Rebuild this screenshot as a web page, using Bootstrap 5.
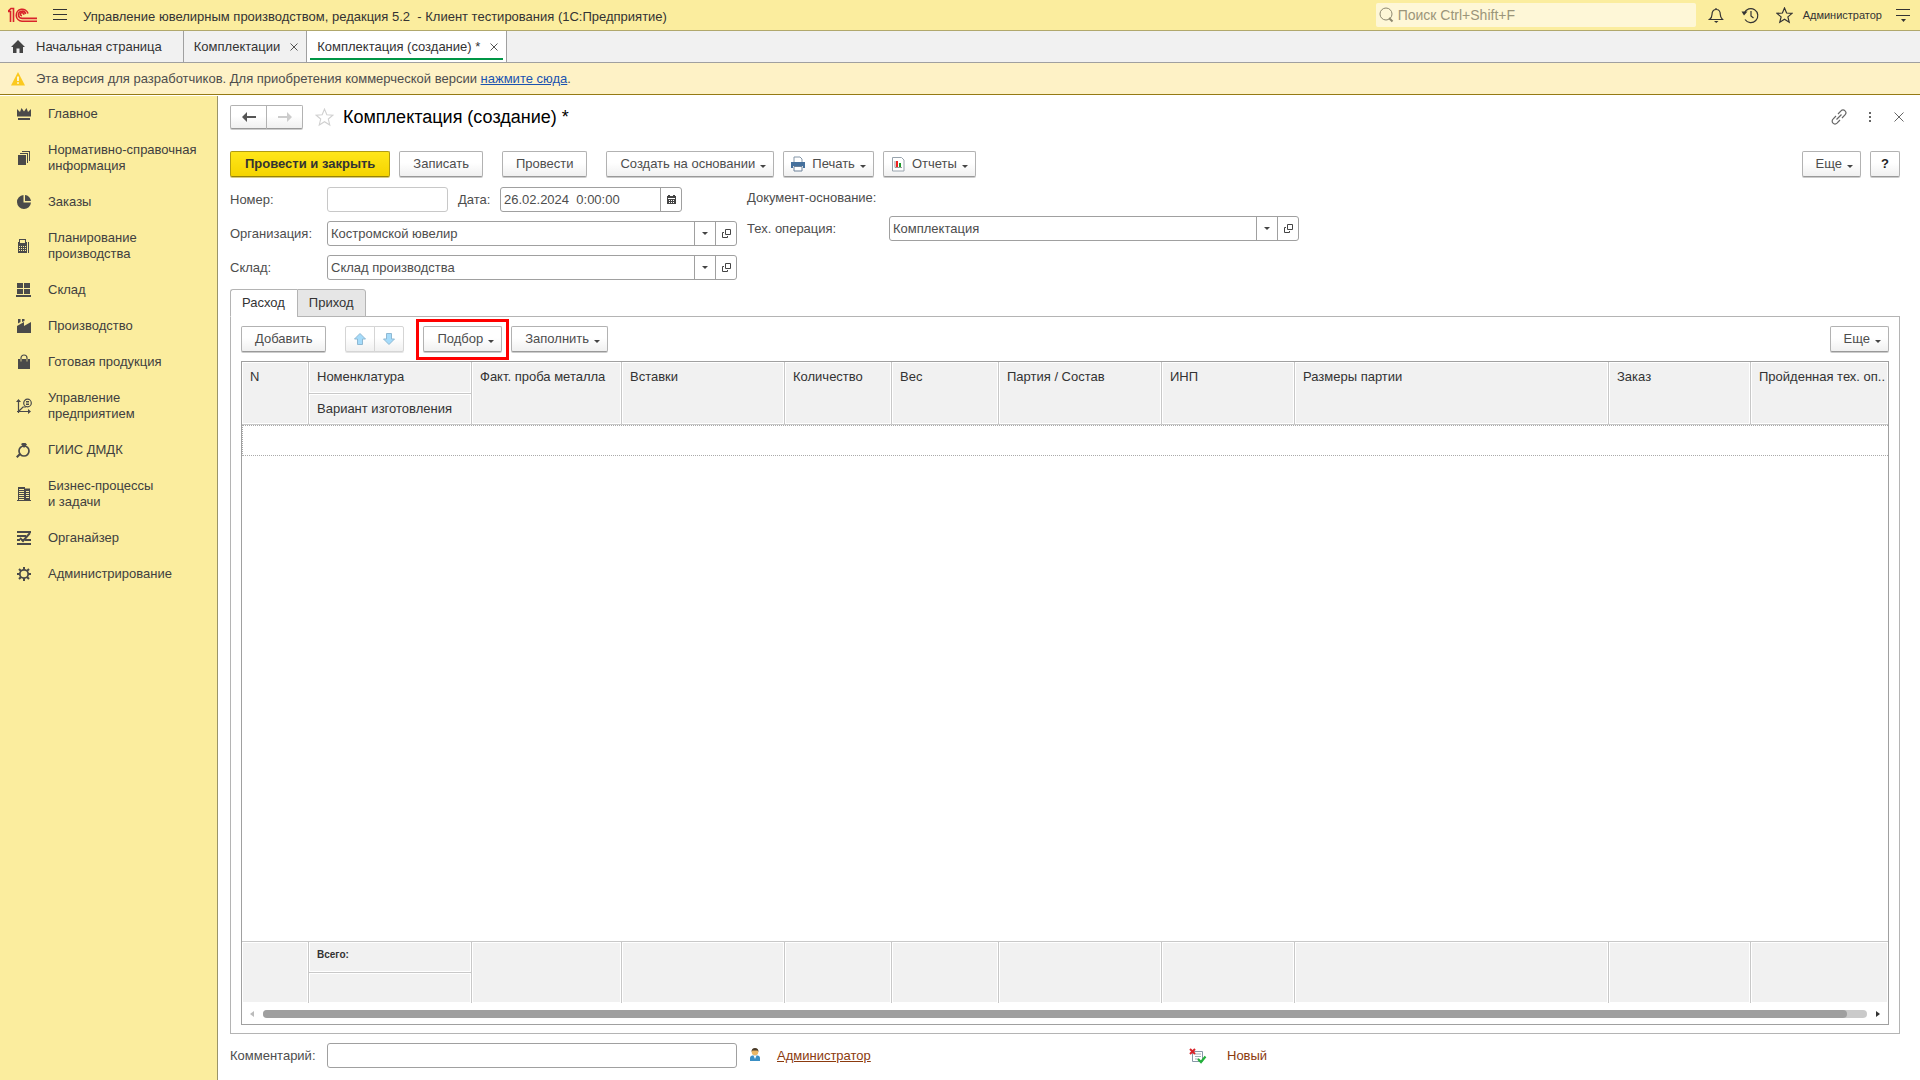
<!DOCTYPE html>
<html lang="ru">
<head>
<meta charset="utf-8">
<meta name="viewport" content="width=device-width, initial-scale=1">
<title>Комплектация (создание) *</title>
<link href="https://cdn.jsdelivr.net/npm/bootstrap@5.3.0/dist/css/bootstrap.min.css" rel="stylesheet">
<style>
:root { --ink: #4d4d4d; --line: #a0a0a0; --soft: #c8c8c8; --cell: #f1f1f1; --sun: #fbed9e; }
body { font-family: "Liberation Sans", Arial, sans-serif; font-size: 13px; line-height: 16px; color: var(--ink); background: #fff; }
svg { display: block; flex: none; }
button, input { font: inherit; color: inherit; }
.plain { border: 0; background: none; padding: 0; display: flex; align-items: center; justify-content: center; }

.top-bar { height: 31px; background: var(--sun); border-bottom: 1px solid #b1a86c; color: #333; padding: 0 10px 0 8px; }
.app-title { white-space: pre; }
.top-search { width: 320px; height: 24px; background: #fef7d7; border-radius: 2px; padding-left: 3px; margin: 3px 0; color: #8d8870; align-self: flex-start; }
.top-search input { border: 0; background: none; outline: 0; padding: 0; font-size: 14px; min-width: 0; }
.top-search input::placeholder { color: #9b957a; opacity: 1; }
.top-icons { gap: 17px; margin: 0 10px 0 12px; }
.user-name { font-size: 11px; margin-right: 14px; }

.window-tabs { height: 32px; background: var(--cell); border-bottom: 1px solid var(--line); color: #333; }
.window-tabs a { color: inherit; text-decoration: none; }
.window-tab { border-right: 1px solid var(--line); padding: 0 8px 0 10px; gap: 10px; }
.window-tab.home { padding: 0 21px 0 11px; gap: 11px; }
.window-tab.current { background: linear-gradient(#009646, #009646) 3px 27px / calc(100% - 6px) 2px no-repeat #fff; }

.dev-note { height: 32px; background: #fef2c6; border-bottom: 1px solid #957a14; padding-left: 11px; gap: 11px; }
.dev-note a { color: #1a53b0; }

.side-menu { width: 218px; flex: none; background: var(--sun); border-right: 1px solid #9a9468; margin-top: 1px; color: #404040; }
.side-menu a { display: flex; align-items: center; padding: 10px 12px 10px 16px; gap: 16px; color: inherit; text-decoration: none; }
.side-menu svg { fill: #4a4a4a; }

.form-area { padding: 10px 20px 12px 12px; min-width: 0; }
.form-title { font-size: 18px; line-height: 24px; color: #000; margin: 0 0 0 9px; font-weight: 400; }
.form-icons { gap: 22px; margin-right: -6px; }
.tool { display: inline-flex; align-items: center; justify-content: center; height: 26px; padding: 0 13px; white-space: nowrap; border: 1px solid #b2b2b2; border-bottom-color: #999; border-radius: 2px; background: linear-gradient(#fff 45%, #f0f0f0); box-shadow: 0 1px 0 #ccc; }
.tool.main-action { padding: 0 14px; background: linear-gradient(#ffe61a, #f5d400); border-color: #b09b13; border-bottom-color: #95820a; box-shadow: 0 1px 0 #d8cb80; font-weight: 700; color: #333; }
.tool.drop { padding-right: 7px; gap: 5px; }
.tool.drop::after { content: ""; border: 3px solid transparent; border-top-color: #444; border-bottom: 0; margin-top: 4px; }
.tool.pictured { padding-left: 6px; }
.tool.pictured svg { margin-right: 1px; }
.tool.help { padding: 0 10px; color: #222; }
.tool.step { height: 24px; width: 37px; padding: 0; }
.tool.move { width: 30px; padding: 0; border-color: #d5d5d5; box-shadow: 0 1px 0 #e5e5e5; }
.tool.first { border-radius: 2px 0 0 2px; }
.tool.last { border-radius: 0 2px 2px 0; margin-left: -1px; }
.tools { gap: 9px; }
.command-bar { margin-top: 22px; }
.apart { margin-left: 10px; }

.fields { gap: 10px; margin-top: 10px; }
.fields-left { width: 507px; gap: 9px; }
.fields-right { width: 552px; gap: 8px; padding-top: 1px; }
.fields-left .lead-label, .comment-label { width: 97px; flex: none; }
.fields-left .date-label { width: 52px; padding-left: 10px; }
.fields-right label { width: 142px; flex: none; }
.no-value { height: 20px; }
.entry { display: flex; height: 25px; border: 1px solid var(--line); border-radius: 3px; background: #fff; min-width: 0; }
.entry input { flex: 1; min-width: 0; width: 0; border: 0; outline: 0; background: none; padding: 0 3px; }
.entry button { width: 21px; border-left: 1px solid var(--line); }
.entry.idle { border-color: var(--soft); width: 121px; }
.entry.date { width: 182px; }
.chev { border: 3px solid transparent; border-top-color: #444; border-bottom: 0; }

.page-tabs { margin-top: 9px; position: relative; z-index: 1; color: #333; }
.page-tab { height: 28px; padding: 0 11px; border: 1px solid #b4b4b4; background: #e6e6e6; color: inherit; border-radius: 0 3px 0 0; }
.page-tab.chosen { background: #fff; border-bottom-color: #fff; border-radius: 3px 0 0 0; border-right: 0; padding-right: 12px; }
.sheet { border: 1px solid #b4b4b4; margin-top: -1px; padding: 9px 10px 8px; min-height: 0; }
.marked { position: relative; display: flex; margin: 0 0 0 10px; }
.marked-frame { position: absolute; inset: -7px -7px -8px; border: 3px solid #f00; pointer-events: none; }

.grid-box { border: 1px solid var(--line); margin-top: 9px; min-height: 0; overflow: hidden; color: #333; }
.rows-box { min-height: 0; }
.rows { width: 100%; height: 100%; table-layout: fixed; border-collapse: separate; border-spacing: 0; }
.rows th, .rows tfoot td { height: 31px; background: var(--cell); border-left: 1px solid var(--soft); box-shadow: inset 0 0 0 1px #fff; padding: 7px 8px; font-weight: 400; vertical-align: top; white-space: nowrap; overflow: hidden; }
.rows th:last-child { padding-right: 0; }
.rows tr:first-child > .edge { border-left: 0; }
.rows .under { border-top: 1px solid var(--soft); }
.rows tfoot tr:first-child td { border-top: 1px solid var(--soft); font-size: 10px; font-weight: 700; padding-top: 5px; }
.rows thead th[rowspan], .rows thead .under { border-bottom: 1px solid var(--soft); }
.rows .blank td { height: 31px; border: 1px dotted #aaa; border-right: 0; padding: 0; }
.rows .rest td { padding: 0; }
.col-n { width: 66px; } .col-item { width: 163px; } .col-probe { width: 150px; } .col-num { width: 107px; }
.col-inp { width: 133px; } .col-size { width: 314px; } .col-order { width: 142px; }
.scroller { height: 21px; padding: 0 8px; gap: 9px; }
.scroller .track { height: 8px; border-radius: 4px; background: #cacaca; }
.scroller .thumb { height: 8px; border-radius: 4px; background: #9f9f9f; }
.arrow-l, .arrow-r { border: 3px solid transparent; }
.arrow-l { border-right: 4px solid #bbb; border-left: 0; }
.arrow-r { border-left: 4px solid #333; border-right: 0; }
.bottom-row { margin-top: 9px; }
.bottom-row .entry { width: 410px; }
.bottom-row a { color: #8b3a0e; }
.bottom-row .author { width: 412px; margin-left: 12px; }
.bottom-row .state { margin-left: 20px; text-decoration: none; }
</style>
</head>
<body class="d-flex flex-column vh-100 overflow-hidden">

<header class="top-bar d-flex align-items-center flex-shrink-0">
  <svg width="29" height="16" viewBox="0 0 29 16" fill="none" stroke="#d9232a" stroke-width="1.600"><path d="M0 4.500h2.500v10.500M2.500 1.500h3v13.500M0 4.500L3 1.500"/><path d="M20 6.500A6 6 0 1 0 14 14.200h15M17.600 7A3.600 3.600 0 1 0 14 11.400h15M15.500 7.800a1.600 1.600 0 1 0-1.500 1"/></svg>
  <button class="plain ms-3" type="button" aria-label="Меню"><svg width="14" height="12" stroke="#333"><path d="M0 .5h14M0 5.500h14M0 10.500h14"/></svg></button>
  <div class="app-title flex-grow-1 ms-3 pt-1">Управление ювелирным производством, редакция 5.2  - Клиент тестирования (1С:Предприятие)</div>
  <div class="top-search d-flex align-items-center">
    <svg width="15" height="16" fill="none" stroke="#8d8870"><circle cx="7" cy="7" r="6"/><path d="M10 11l3.500 3.500" stroke-width="2"/></svg>
    <input class="flex-grow-1 ms-1" type="search" placeholder="Поиск Ctrl+Shift+F" aria-label="Поиск">
  </div>
  <div class="top-icons d-flex align-items-center">
    <button class="plain" type="button" aria-label="Оповещения"><svg width="16" height="17" viewBox="0 0 16 17" fill="none" stroke="#333" stroke-width="1.200"><path d="M8 1v1.500M2 12.500h12.500c-1.500-1.500-2.200-2.500-2.200-5C12.300 4 10.500 2.500 8.200 2.500S4 4 4 7.500c0 2.500-.5 3.500-2.500 5z"/><path d="M6 14h4.500L8.200 16z" fill="#333" stroke="none"/></svg></button>
    <button class="plain" type="button" aria-label="История"><svg width="18" height="17" viewBox="0 0 18 17" fill="none" stroke="#333" stroke-width="1.200"><path d="M3.300 6A7 7 0 1 1 4 12.500M10 4v5l2.500 2"/><path d="M.5 4.500h6L3 8.500z" fill="#333" stroke="none"/></svg></button>
    <button class="plain" type="button" aria-label="Избранное"><svg width="17" height="17" viewBox="0 0 17 17" fill="none" stroke="#333" stroke-width="1.200"><path d="M8.500 1l2.100 5 5.400.4-4.100 3.500 1.300 5.300-4.700-2.900-4.700 2.900 1.300-5.300L1 6.400 6.400 6z"/></svg></button>
  </div>
  <span class="user-name">Администратор</span>
  <button class="plain" type="button" aria-label="Настройки"><svg width="14" height="14" stroke="#333"><path d="M0 1.500h14M0 7.500h14"/><path d="M5 11h5l-2.500 3z" fill="#333" stroke="none"/></svg></button>
</header>

<nav class="window-tabs d-flex flex-shrink-0">
  <a class="window-tab home d-flex align-items-center" href="#"><svg width="14" height="13" fill="#444"><path d="M7 0l7 7h-2v6H8.500V8.500h-3V13H2V7H0z"/></svg>Начальная страница</a>
  <div class="window-tab d-flex align-items-center"><a href="#">Комплектации</a><button class="plain" type="button" aria-label="Закрыть"><svg width="8" height="8" stroke="#555"><path d="M.5.500l7 7M7.500.500l-7 7"/></svg></button></div>
  <div class="window-tab current d-flex align-items-center"><a href="#">Комплектация (создание) *</a><button class="plain" type="button" aria-label="Закрыть"><svg width="8" height="8" stroke="#555"><path d="M.5.500l7 7M7.500.500l-7 7"/></svg></button></div>
</nav>

<div class="dev-note d-flex align-items-center flex-shrink-0">
  <svg width="14" height="14"><path d="M7 0l7 13.500H0z" fill="#fbc91f"/><path d="M6.200 4.500h1.600v4.500H6.200zM6.200 10.200h1.600v1.600H6.200z" fill="#fff"/></svg>
  <span>Эта версия для разработчиков. Для приобретения коммерческой версии <a href="#">нажмите сюда</a>.</span>
</div>

<div class="d-flex flex-grow-1 overflow-hidden">
  <nav class="side-menu">
    <ul class="list-unstyled mb-0">
      <li><a href="#"><svg width="16" height="16"><path d="M1 3l3 3 1.500-4L8 5.500 10.500 2 12 6l3-3v7.500H1zM2 12h12v2H2z"/></svg>Главное</a></li>
      <li><a href="#"><svg width="16" height="16"><path d="M2 5h8v10H2zM4 3h8v10h-1V4H4zM6 1h8v10h-1V2H6z"/></svg><span>Нормативно-справочная<br>информация</span></a></li>
      <li><a href="#"><svg width="16" height="16"><path d="M7.500 1v7.500H15A7 7 0 1 1 7.500 1zM9 1a6.500 6.500 0 0 1 6 6H9z"/></svg>Заказы</a></li>
      <li><a href="#"><svg width="16" height="16"><path fill-rule="evenodd" d="M2 4h1V1h7v3h1v11H2zM4 2v3h5V2zM3 8h1v1H3zM5 8h1v1H5zM7 8h1v1H7zM9 8h1v1H9zM3 10h1v1H3zM5 10h1v1H5zM7 10h1v1H7zM9 10h1v1H9zM3 12h1v1H3zM5 12h1v1H5zM7 12h1v1H7zM9 12h1v1H9zM12 4h1v11h-1z"/></svg><span>Планирование<br>производства</span></a></li>
      <li><a href="#"><svg width="16" height="16"><path d="M1 1h6v5H1zM8 1h6v5H8zM1 7h6v5H1zM8 7h6v5H8zM0 13h15v2H0z"/></svg>Склад</a></li>
      <li><a href="#"><svg width="16" height="16"><path d="M2 1h2.500v3L2 5.500zM6 1h2.500v2L6 4zM1 8l7-4v4l7-4v11H1z"/></svg>Производство</a></li>
      <li><a href="#"><svg width="16" height="16"><path d="M2 5h12v10H2z"/><path d="M5 7V4a3 3 0 0 1 6 0v3" fill="none" stroke="#4a4a4a" stroke-width="1.200"/><path d="M5 5v2.500M11 5v2.500" stroke="#fbed9e" stroke-width=".8"/></svg>Готовая продукция</a></li>
      <li><a href="#"><svg width="16" height="16"><path d="M2.500 15V2M1 13.500h13M3 13l4-4 3 0" fill="none" stroke="#4a4a4a" stroke-width="1.200"/><path d="M0 4l2.500-3L5 4zM12 11l3 2.500-3 2.500z"/><circle cx="11.500" cy="5" r="3.800" fill="none" stroke="#4a4a4a" stroke-width="1.200"/><path d="M10 3h3v1.500h-3zM10 5.500h3V7h-3z"/></svg><span>Управление<br>предприятием</span></a></li>
      <li><a href="#"><svg width="16" height="16"><circle cx="8" cy="9" r="5" fill="none" stroke="#4a4a4a" stroke-width="1.700"/><path d="M5 2l1.500-1h3L11 2.500 8 6zM0 14.500l3.500-3.500 1.500 1.500L1.500 16z"/></svg>ГИИС ДМДК</a></li>
      <li><a href="#"><svg width="16" height="16"><path fill-rule="evenodd" d="M2 1h7v1.500h5V14h1v1H1v-1h1zM3 3v1h5V3zM3 5v1h5V5zM3 7v1h5V7zM3 9v1h5V9zM3 11v1h5v-1zM3 13v1h5v-1zM10 5v1h3V5zM10 7v1h3V7zM10 9v1h3V9zM10 11v1h3v-1z"/></svg><span>Бизнес-процессы<br>и задачи</span></a></li>
      <li><a href="#"><svg width="16" height="16"><path d="M1 2h14M1 6h9M1 10h3M9 10h6M1 14h14M4 8l3 3 7-8" fill="none" stroke="#4a4a4a" stroke-width="1.900"/></svg>Органайзер</a></li>
      <li><a href="#"><svg width="16" height="16"><circle cx="8" cy="8" r="4.200" fill="none" stroke="#4a4a4a" stroke-width="1.800"/><path d="M8 1v3M8 12v3M1 8h3M12 8h3M3 3l2 2M11 11l2 2M13 3l-2 2M5 11l-2 2" stroke="#4a4a4a" stroke-width="2"/></svg>Администрирование</a></li>
    </ul>
  </nav>

  <main class="form-area flex-grow-1 d-flex flex-column">
    <div class="d-flex align-items-center">
      <button class="tool step first" type="button" aria-label="Назад"><svg width="14" height="10"><path d="M0 5l5-5v4h9v2H5v4z" fill="#555"/></svg></button>
      <button class="tool step last" type="button" aria-label="Вперед"><svg width="14" height="10"><path d="M14 5L9 0v4H0v2h9v4z" fill="#ccc"/></svg></button>
      <button class="plain ms-2 ps-1" type="button" aria-label="В избранное"><svg width="19" height="19" viewBox="0 0 17 17" fill="none" stroke="#d0d0d0"><path d="M8.500 1l2.100 5 5.400.4-4.100 3.500 1.300 5.300-4.700-2.900-4.700 2.900 1.300-5.300L1 6.400 6.400 6z"/></svg></button>
      <h1 class="form-title flex-grow-1">Комплектация (создание) *</h1>
      <div class="form-icons d-flex align-items-center">
        <button class="plain" type="button" aria-label="Ссылка"><svg width="16" height="16" fill="none" stroke="#666" stroke-width="1.200"><path d="M7 5l3-3.200a2.800 2.800 0 0 1 4 4L11 9M9 11l-3 3.200a2.800 2.800 0 0 1-4-4L5 7M5.500 10.500l5-5"/></svg></button>
        <button class="plain" type="button" aria-label="Еще"><svg width="3" height="12" fill="#666"><path d="M0 1h2v2H0zM0 5h2v2H0zM0 9h2v2H0z"/></svg></button>
        <button class="plain" type="button" aria-label="Закрыть"><svg width="12" height="10" stroke="#666"><path d="M.5.500l9 9M9.500.500l-9 9"/></svg></button>
      </div>
    </div>

    <div class="tools command-bar d-flex">
      <button class="tool main-action" type="button">Провести и закрыть</button>
      <button class="tool" type="button">Записать</button>
      <button class="tool apart" type="button">Провести</button>
      <button class="tool drop apart" type="button">Создать на основании</button>
      <button class="tool drop pictured" type="button"><svg width="16" height="16"><path d="M4 7V1h6l2 2v4" fill="#fff" stroke="#8496a8"/><path d="M1 6h14v6h-2v-2H3v2H1z" fill="#45709c"/><path d="M4 10.500h8V15H4z" fill="#fff" stroke="#6c8199"/></svg>Печать</button>
      <button class="tool drop pictured" type="button"><svg width="16" height="16"><path d="M2.500 1.500h9l2.500 2.500v11H2.500z" fill="#fff" stroke="#98a3ad"/><path d="M5 5v6.500h7" fill="none" stroke="#999"/><path d="M6 5h2v6H6z" fill="#f02020"/><path d="M9 7h2v4H9z" fill="#1b9a2a"/></svg>Отчеты</button>
      <button class="tool drop ms-auto" type="button">Еще</button>
      <button class="tool help fw-bold" type="button" aria-label="Справка">?</button>
    </div>

    <div class="fields d-flex">
      <div class="fields-left d-flex flex-column">
        <div class="d-flex align-items-center">
          <label class="lead-label" for="num">Номер:</label>
          <div class="entry idle"><input id="num" type="text"></div>
          <label class="date-label" for="date">Дата:</label>
          <div class="entry date"><input id="date" type="text" value="26.02.2024  0:00:00"><button class="plain" type="button" aria-label="Календарь"><svg width="9" height="9" fill="#444"><path fill-rule="evenodd" d="M0 1h1V0h2v1h3V0h2v1h1v8H0zM1 3v1h7V3zM2 5v1h1V5zM4 5v1h1V5zM6 5v1h1V5zM2 7v1h1V7zM4 7v1h1V7zM6 7v1h1V7z"/></svg></button></div>
        </div>
        <div class="d-flex align-items-center">
          <label class="lead-label" for="org">Организация:</label>
          <div class="entry flex-grow-1"><input id="org" type="text" value="Костромской ювелир"><button class="plain" type="button" aria-label="Выбрать"><i class="chev"></i></button><button class="plain" type="button" aria-label="Открыть"><svg width="9" height="9" fill="none" stroke="#444"><path d="M3.500.500h5v5h-5zM2 3.500H.5v5h5V7"/></svg></button></div>
        </div>
        <div class="d-flex align-items-center">
          <label class="lead-label" for="store">Склад:</label>
          <div class="entry flex-grow-1"><input id="store" type="text" value="Склад производства"><button class="plain" type="button" aria-label="Выбрать"><i class="chev"></i></button><button class="plain" type="button" aria-label="Открыть"><svg width="9" height="9" fill="none" stroke="#444"><path d="M3.500.500h5v5h-5zM2 3.500H.5v5h5V7"/></svg></button></div>
        </div>
      </div>
      <div class="fields-right d-flex flex-column">
        <div class="no-value d-flex align-items-center">Документ-основание:</div>
        <div class="d-flex align-items-center">
          <label for="oper">Тех. операция:</label>
          <div class="entry flex-grow-1"><input id="oper" type="text" value="Комплектация"><button class="plain" type="button" aria-label="Выбрать"><i class="chev"></i></button><button class="plain" type="button" aria-label="Открыть"><svg width="9" height="9" fill="none" stroke="#444"><path d="M3.500.500h5v5h-5zM2 3.500H.5v5h5V7"/></svg></button></div>
        </div>
      </div>
    </div>

    <div class="page-tabs d-flex">
      <button class="page-tab chosen" type="button">Расход</button>
      <button class="page-tab" type="button">Приход</button>
    </div>
    <section class="sheet flex-grow-1 d-flex flex-column">
      <div class="tools d-flex">
        <button class="tool" type="button">Добавить</button>
        <div class="d-flex apart">
          <button class="tool move first" type="button" aria-label="Вверх"><svg width="12" height="12"><path d="M6 .5l5.500 5.500H8.500v5.500h-5V6H.5z" fill="#a5dbfa" stroke="#8fb9d3"/></svg></button>
          <button class="tool move last" type="button" aria-label="Вниз"><svg width="12" height="12"><path d="M6 11.500L.5 6h3V.5h5V6h3z" fill="#a5dbfa" stroke="#8fb9d3"/></svg></button>
        </div>
        <div class="marked"><button class="tool drop" type="button">Подбор</button><span class="marked-frame"></span></div>
        <button class="tool drop" type="button">Заполнить</button>
        <button class="tool drop ms-auto" type="button">Еще</button>
      </div>
      <div class="grid-box flex-grow-1 d-flex flex-column">
        <div class="rows-box flex-grow-1">
          <table class="rows">
            <colgroup><col class="col-n"><col class="col-item"><col class="col-probe"><col class="col-item"><col class="col-num"><col class="col-num"><col class="col-item"><col class="col-inp"><col class="col-size"><col class="col-order"><col></colgroup>
            <thead>
              <tr><th class="edge" rowspan="2">N</th><th>Номенклатура</th><th rowspan="2">Факт. проба металла</th><th rowspan="2">Вставки</th><th rowspan="2">Количество</th><th rowspan="2">Вес</th><th rowspan="2">Партия / Состав</th><th rowspan="2">ИНП</th><th rowspan="2">Размеры партии</th><th rowspan="2">Заказ</th><th rowspan="2">Пройденная тех. оп..</th></tr>
              <tr><th class="under">Вариант изготовления</th></tr>
            </thead>
            <tbody>
              <tr class="blank"><td colspan="11"></td></tr>
              <tr class="rest"><td colspan="11"></td></tr>
            </tbody>
            <tfoot>
              <tr><td class="edge" rowspan="2"></td><td>Всего:</td><td rowspan="2"></td><td rowspan="2"></td><td rowspan="2"></td><td rowspan="2"></td><td rowspan="2"></td><td rowspan="2"></td><td rowspan="2"></td><td rowspan="2"></td><td rowspan="2"></td></tr>
              <tr><td class="under"></td></tr>
            </tfoot>
          </table>
        </div>
        <div class="scroller d-flex align-items-center flex-shrink-0">
          <i class="arrow-l"></i><div class="track flex-grow-1"><div class="thumb" style="width:98.75%"></div></div><i class="arrow-r"></i>
        </div>
      </div>
    </section>

    <div class="bottom-row d-flex align-items-center">
      <label class="comment-label" for="note">Комментарий:</label>
      <div class="entry"><input id="note" type="text"></div>
      <svg class="ms-2" width="20" height="16" viewBox="-4 1 20 16"><path d="M1 14v-3c0-2 2-2.500 3-2.500h4c1 0 3 .5 3 2.500v3z" fill="#3a8fc4"/><path d="M4.500 8.500h3L6 12z" fill="#fff"/><circle cx="6" cy="5" r="3.300" fill="#eab765"/><path d="M2.500 5a3.500 4 0 0 1 7 0l-1-1.500h-5z" fill="#4a3b28"/></svg>
      <a class="author" href="#">Администратор</a>
      <svg width="18" height="16"><path d="M3.500 3.500h10v10h-10z" fill="#fff" stroke="#8798a8"/><path d="M6 6h6M6 8.500h6M6 11h4" stroke="#a0adb8"/><path d="M1 1l5 5M6 1L1 6" stroke="#d9232a" stroke-width="2"/><path d="M9 11l3 3 4.500-5.500" fill="none" stroke="#23b03b" stroke-width="2.200"/></svg>
      <a class="state" href="#">Новый</a>
    </div>
  </main>
</div>

<script src="https://cdn.jsdelivr.net/npm/bootstrap@5.3.0/dist/js/bootstrap.bundle.min.js"></script>
</body>
</html>
